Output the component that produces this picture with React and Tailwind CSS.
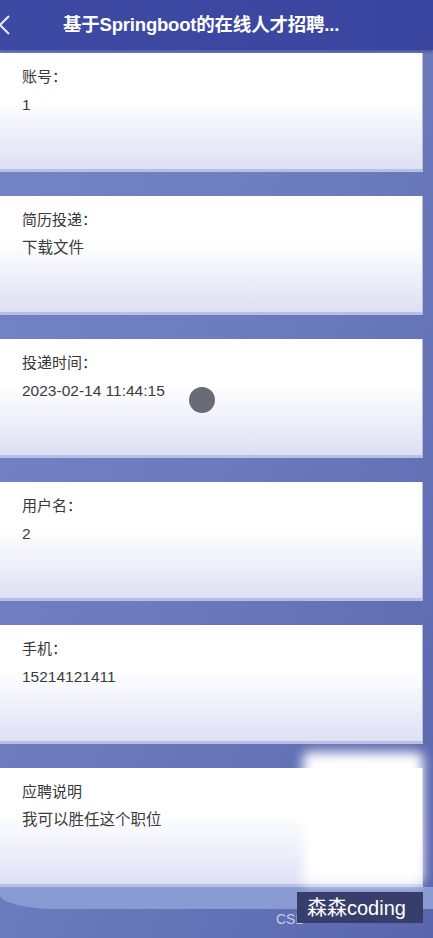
import React from 'react';

const fields = [
    { label: '账号：', value: '1' },
    { label: '简历投递：', value: '下载文件' },
    { label: '投递时间：', value: '2023-02-14 11:44:15' },
    { label: '用户名：', value: '2' },
    { label: '手机：', value: '15214121411' },
    { label: '应聘说明', value: '我可以胜任这个职位' },
];

function Card({ label, value }) {
    return (
        <div className="h-[119px] w-[423px] border-r border-r-[#b9bdd6] border-b-[3px] border-b-[#b8bfe4] bg-gradient-to-b from-white from-40% to-[#dde0f4] pl-[22px] pt-[14px]">
            <div className="text-[15px] leading-[20px] text-[#383838]">{label}</div>
            <div className="mt-[8px] text-[15.5px] leading-[20px] text-[#3c3c3c]">{value}</div>
        </div>
    );
}

export default function App() {
    return (
        <div
            className="relative h-[938px] w-[433px] overflow-hidden bg-gradient-to-br from-[#7585c6] via-[#6c7bbd] to-[#5966ad]"
            style={{ fontFamily: '"Liberation Sans", Arial, "Noto Sans CJK SC", sans-serif' }}
        >
            <div className="flex h-[50px] items-center bg-gradient-to-r from-[#3d4aa3] to-[#3a45a0] shadow-[0_2px_3px_rgba(30,40,100,0.4)]">
                <svg width="14" height="22" viewBox="0 0 14 22" className="ml-[-2px]">
                    <path d="M11 2 L2 11 L11 20" fill="none" stroke="#e8eaf6" strokeWidth="2" />
                </svg>
                <div className="ml-[51px] text-[18.5px] font-bold tracking-[-0.2px] text-white">基于Springboot的在线人才招聘...</div>
            </div>

            <div className="mt-[3px] flex flex-col gap-[24px]">
                {fields.map((f) => (
                    <Card key={f.label} label={f.label} value={f.value} />
                ))}
            </div>

            <div className="h-[22px] w-[433px] rounded-bl-[60px_14px] bg-[#8a9ad3]"></div>

            <div className="absolute left-[189px] top-[387px] h-[26px] w-[26px] rounded-full bg-[#6b6b78] blur-[0.5px]"></div>

            <div className="absolute left-[303px] top-[752px] h-[132px] w-[120px] rounded-[6px] bg-white blur-[6px]"></div>

            <div className="absolute left-[276px] top-[909px] text-[14px] text-[#c8cce0]">CSD</div>
            <div className="absolute left-[297px] top-[892px] flex h-[31px] w-[126px] items-center bg-[#383e6c] pl-[10px] text-[20px] text-white">森森coding</div>
        </div>
    );
}
